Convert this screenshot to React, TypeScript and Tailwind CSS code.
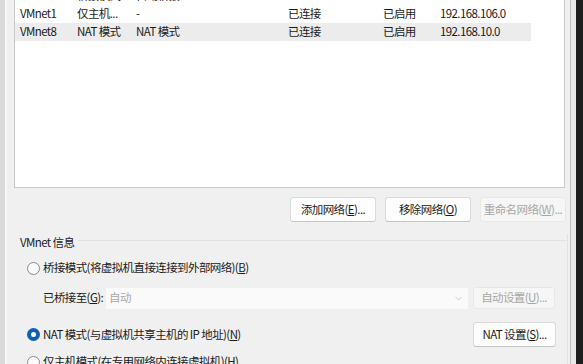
// 虚拟网络编辑器 对话框（局部截图）

import React from 'react';
import { ChevronDown } from 'lucide-react';

const font = { fontFamily: '"Noto Sans CJK SC", "Noto Sans", sans-serif' };

interface NetRow {
  name: string;
  type: string;
  external: string;
  host: string;
  dhcp: string;
  subnet: string;
  selected?: boolean;
}

const rows: NetRow[] = [
  { name: '', type: '桥接模式', external: '自动桥接', host: '', dhcp: '', subnet: '' },
  { name: 'VMnet1', type: '仅主机...', external: '-', host: '已连接', dhcp: '已启用', subnet: '192.168.106.0' },
  { name: 'VMnet8', type: 'NAT 模式', external: 'NAT 模式', host: '已连接', dhcp: '已启用', subnet: '192.168.10.0', selected: true },
];

function Row({ row }: { row: NetRow }) {
  return (
    <div
      className={
        'flex h-[18px] w-[516px] items-center text-[#1a1a1a] ' +
        (row.selected ? 'bg-[#ececec]' : '')
      }
    >
      <div className="w-[62px] shrink-0 pl-[5px] whitespace-nowrap">{row.name}</div>
      <div className="w-[59px] shrink-0 whitespace-nowrap">{row.type}</div>
      <div className="w-[152px] shrink-0 whitespace-nowrap">{row.external}</div>
      <div className="w-[95px] shrink-0 whitespace-nowrap">{row.host}</div>
      <div className="w-[57px] shrink-0 whitespace-nowrap">{row.dhcp}</div>
      <div className="whitespace-nowrap">{row.subnet}</div>
    </div>
  );
}

function Button({
  children,
  disabled,
  className = '',
}: {
  children: React.ReactNode;
  disabled?: boolean;
  className?: string;
}) {
  return (
    <div
      className={
        'flex shrink-0 items-center justify-center whitespace-nowrap rounded-[3px] border ' +
        (disabled
          ? 'border-[#e8e8e8] bg-[#f6f6f6] text-[#a6a6a6] '
          : 'border-[#d9d9d9] border-b-[#c6c6c6] bg-[#fdfdfd] text-[#1a1a1a] ') +
        className
      }
    >
      {children}
    </div>
  );
}

function Radio({ checked }: { checked?: boolean }) {
  if (checked) {
    return (
      <div className="flex h-[13px] w-[13px] shrink-0 items-center justify-center rounded-full bg-[#0f5fb0]">
        <div className="h-[5px] w-[5px] rounded-full bg-white" />
      </div>
    );
  }
  return <div className="h-[13px] w-[13px] shrink-0 rounded-full border border-[#8a8a8a] bg-[#fbfbfb]" />;
}

export default function App() {
  return (
    <div
      className="flex h-[364px] w-[583px] overflow-hidden bg-[#f0f0f0] text-[11.5px] tracking-[-0.6px]"
      style={font}
    >
      {/* 左侧窗口边框 */}
      <div className="h-full w-[5px] shrink-0 bg-[#d9d9d9]" />
      <div className="h-full w-[2px] shrink-0 bg-[#f7f7f7]" />

      <div className="flex h-full min-w-0 flex-1 flex-col overflow-hidden">
        {/* 网络列表 */}
        <div className="ml-[7px] mr-[5px] h-[188px] shrink-0 overflow-hidden border border-t-0 border-[#c9c9c9] bg-white">
          <div className="mt-[-13px]">
            {rows.map((row, i) => (
              <Row key={i} row={row} />
            ))}
          </div>
        </div>

        <div className="mr-[4px] mt-[9px] flex shrink-0 justify-end gap-[9px]">
          <Button className="h-[25px] w-[86px]">添加网络(<u>E</u>)...</Button>
          <Button className="h-[25px] w-[86px]">移除网络(<u>O</u>)</Button>
          <Button disabled className="h-[25px] w-[86px]">
            重命名网络(<u>W</u>)...
          </Button>
        </div>

        {/* VMnet 信息 */}
        <div className="mr-[2px] mt-[12px] flex shrink-0 flex-col border-r border-[#e3e3e3] pl-[13px]">
          <div className="flex h-[18px] items-center">
            <span className="text-[#1a1a1a]">VMnet 信息</span>
            <div className="ml-[4px] mt-[-6px] h-px flex-1 bg-[#e3e3e3]" />
          </div>

          <div className="mt-[7px] flex h-[18px] items-center gap-[3px] pl-[7px] text-[#1a1a1a]">
            <Radio />
            <span>
              桥接模式(将虚拟机直接连接到外部网络)(<u>B</u>)
            </span>
          </div>

          <div className="mt-[10px] flex h-[22px] items-center pl-[23px]">
            <span className="w-[63px] shrink-0 whitespace-nowrap text-[#1a1a1a]">
              已桥接至(<u>G</u>):
            </span>
            <div className="flex h-[21px] w-[362px] shrink-0 items-center justify-between bg-[#fafafa] pl-[3px] pr-[4px] text-[#a8a8a8]">
              <span>自动</span>
              <ChevronDown className="h-[11px] w-[11px] text-[#b8b8b8]" strokeWidth={1.5} />
            </div>
            <Button disabled className="ml-[5px] h-[22px] w-[82px]">
              自动设置(<u>U</u>)...
            </Button>
          </div>

          <div className="mt-[13px] flex h-[25px] items-center pl-[7px] text-[#1a1a1a]">
            <div className="flex items-center gap-[3px]">
              <Radio checked />
              <span>
                NAT 模式(与虚拟机共享主机的 IP 地址)(<u>N</u>)
              </span>
            </div>
            <Button className="ml-auto mr-[11px] h-[25px] w-[83px]">
              NAT 设置(<u>S</u>)...
            </Button>
          </div>

          <div className="mt-[6px] flex h-[18px] items-center gap-[3px] pl-[7px] text-[#1a1a1a]">
            <Radio />
            <span>
              仅主机模式(在专用网络内连接虚拟机)(<u>H</u>)
            </span>
          </div>
        </div>
      </div>

      {/* 右侧窗口边框 */}
      <div className="h-full w-[1px] shrink-0 bg-[#c2c2c2]" />
      <div className="h-full w-[5px] shrink-0 bg-[#e9e9e9]" />
      <div className="h-full w-[7px] shrink-0 bg-[#1e1e1e]" />
    </div>
  );
}
